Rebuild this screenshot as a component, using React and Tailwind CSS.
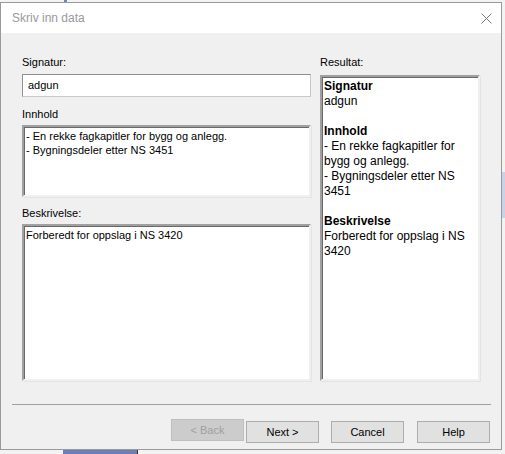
import React from "react";

const sunken =
  "border-2 border-t-[#a0a0a0] border-l-[#a0a0a0] border-r-[#f0f0f0] border-b-[#f0f0f0] shadow-[inset_1px_1px_0_#696969,1px_1px_0_#e3e3e3] bg-white";

function Label({ children }) {
  return <div className="h-[14px] text-[11px] leading-[14px] text-black">{children}</div>;
}

function Button({ children, disabled }) {
  return (
    <button
      disabled={disabled}
      className={
        disabled
          ? "w-[73px] h-[22px] border border-[#bfbfbf] bg-[#cccccc] text-[11px] text-[#a0a0a0]"
          : "w-[73px] h-[22px] border border-[#adadad] bg-[#e1e1e1] text-[11px] text-black"
      }
    >
      {children}
    </button>
  );
}

export default function App() {
  return (
    <div
      className="relative w-[505px] h-[454px] overflow-hidden bg-[#f3f3f3]"
      style={{ fontFamily: '"Liberation Sans", Arial, sans-serif' }}
    >
      {/* bits of the window behind */}
      <div className="absolute left-[64px] top-0 w-[3px] h-[3px] bg-[#6b86b8]" />
      <div className="absolute left-[63px] top-[450px] w-[75px] h-[4px] bg-[#6d7fae]" />
      <div className="absolute left-[137px] top-[450px] w-[1px] h-[4px] bg-[#333]" />
      <div className="absolute left-[502px] top-[172px] w-[3px] h-[46px] bg-[#c9d3e6]" />

      {/* dialog window */}
      <div className="absolute left-0 top-[2px] w-[502px] h-[448px] border border-[#9a9a9a] bg-[#f0f0f0] flex flex-col">
        <div className="h-[30px] bg-white flex items-center justify-between pl-[11px] pr-[9px]">
          <span className="text-[12px] text-[#999999]">Skriv inn data</span>
          <svg width="11" height="11" viewBox="0 0 11 11" className="mt-[1px]">
            <path d="M0.5 0.5 L10.5 10.5 M10.5 0.5 L0.5 10.5" stroke="#7a7a7a" strokeWidth="1" fill="none" />
          </svg>
        </div>

        <div className="flex pt-[22px] pl-[21px] gap-[9px]">
          <div className="w-[289px] flex flex-col">
            <Label>Signatur:</Label>
            <div className="mt-[5px] h-[23px] border border-[#8f8f8f] border-r-[#c8c8c8] border-b-[#c8c8c8] bg-white pl-[5px] flex items-center text-[11px]">
              adgun
            </div>
            <div className="mt-[10px]">
              <Label>Innhold</Label>
            </div>
            <div className={"mt-[4px] h-[72px] pl-[2px] pt-[2px] text-[11px] leading-[14px] " + sunken}>
              <div>- En rekke fagkapitler for bygg og anlegg.</div>
              <div>- Bygningsdeler etter NS 3451</div>
            </div>
            <div className="mt-[9px]">
              <Label>Beskrivelse:</Label>
            </div>
            <div className={"mt-[4px] h-[157px] pl-[2px] pt-[2px] text-[11px] leading-[14px] " + sunken}>
              Forberedt for oppslag i NS 3420
            </div>
          </div>

          <div className="w-[160px] flex flex-col">
            <Label>Resultat:</Label>
            <div className={"mt-[6px] h-[306px] pl-[2px] pt-[2px] text-[12px] leading-[15px] " + sunken}>
              <div className="font-bold">Signatur</div>
              <div>adgun</div>
              <div className="h-[15px]" />
              <div className="font-bold">Innhold</div>
              <div>- En rekke fagkapitler for bygg og anlegg.</div>
              <div>- Bygningsdeler etter NS 3451</div>
              <div className="h-[15px]" />
              <div className="font-bold">Beskrivelse</div>
              <div>Forberedt for oppslag i NS 3420</div>
            </div>
          </div>
        </div>

        <div className="mt-[23px] ml-[11px] mr-[10px] h-[1px] bg-[#a0a0a0]" />

        <div className="mt-[14px] flex justify-end pr-[11px]">
          <Button disabled>&lt; Back</Button>
          <div className="ml-[2px]">
            <Button>Next &gt;</Button>
          </div>
          <div className="ml-[12px]">
            <Button>Cancel</Button>
          </div>
          <div className="ml-[13px]">
            <Button>Help</Button>
          </div>
        </div>
      </div>
    </div>
  );
}
